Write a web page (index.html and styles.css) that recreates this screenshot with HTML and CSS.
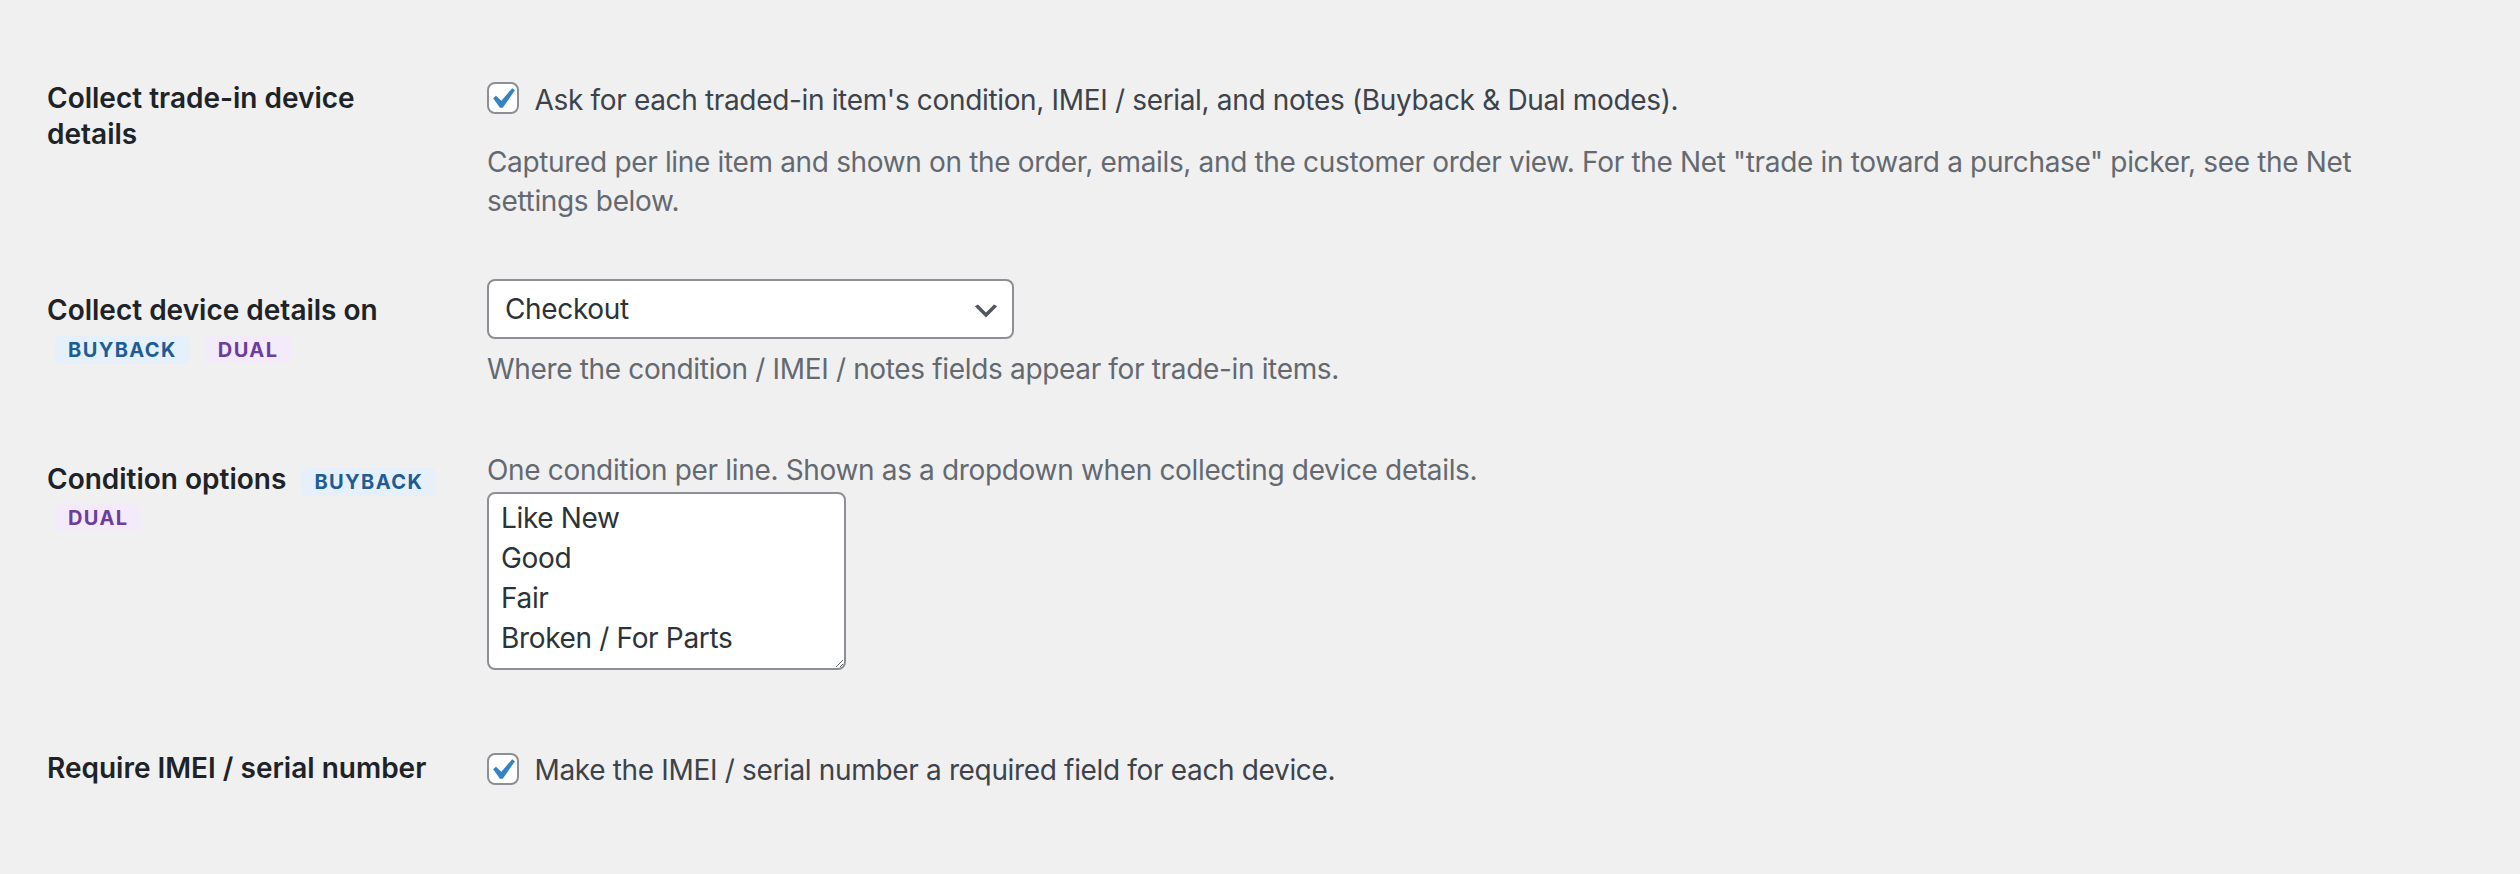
FILE: index.html
```html
<!DOCTYPE html>
<html lang="en">
  <head>
    <meta charset="UTF-8" />
    <meta name="viewport" content="width=device-width, initial-scale=1.0" />
    <title>Trade-in Settings</title>
    <link rel="stylesheet" href="styles.css">
  </head>
  <body>
    <div class="form-table">
      <!-- Collect details toggle -->
      <div class="row">
        <div class="row-label">Collect trade-in device details</div>
        <div class="row-field">
          <label class="check"><span class="box"><svg viewBox="0 0 20 20"><path d="M14.83 4.89l1.34.94-5.81 8.38H9.02L5.78 9.67l1.34-1.25 2.57 2.4z" fill="#3582c4"/></svg></span> Ask for each traded-in item's condition, IMEI / serial, and notes (Buyback &amp; Dual modes).</label>
          <p class="description">Captured per line item and shown on the order, emails, and the customer order view. For the Net "trade in toward a purchase" picker, see the Net settings below.</p>
        </div>
      </div>

      <!-- Where to collect -->
      <div class="row">
        <div class="row-label">Collect device details on <span class="badge buyback">BUYBACK</span> <span class="badge dual">DUAL</span></div>
        <div class="row-field">
          <div class="select-wrap">
            <select>
              <option>Checkout</option>
              <option>Cart</option>
            </select>
            <svg class="chev" viewBox="0 0 20 20"><path d="M5 6l5 5 5-5 2 1-7 7-7-7 2-1z" fill="#50575e"/></svg>
          </div>
          <p class="description after-select">Where the condition / IMEI / notes fields appear for trade-in items.</p>
        </div>
      </div>

      <!-- Condition list -->
      <div class="row">
        <div class="row-label">Condition options <span class="badge buyback">BUYBACK</span> <span class="badge dual">DUAL</span></div>
        <div class="row-field">
          <p class="description first">One condition per line. Shown as a dropdown when collecting device details.</p>
          <textarea rows="4">Like New
Good
Fair
Broken / For Parts</textarea>
        </div>
      </div>

      <!-- IMEI required -->
      <div class="row">
        <div class="row-label">Require IMEI / serial number</div>
        <div class="row-field">
          <label class="check"><span class="box"><svg viewBox="0 0 20 20"><path d="M14.83 4.89l1.34.94-5.81 8.38H9.02L5.78 9.67l1.34-1.25 2.57 2.4z" fill="#3582c4"/></svg></span> Make the IMEI / serial number a required field for each device.</label>
        </div>
      </div>
    </div>
  </body>
</html>
```

FILE: styles.css
```css
body {
  margin: 0;
  background: #f0f0f1;
  font-family: Inter, "Noto Sans", sans-serif;
  color: #3c434a;
}
.form-table {
  padding: 40px 80px 0 47px;
}
.row {
  display: grid;
  grid-template-columns: 420px 1fr;
}
.row-label {
  padding: 40px 20px 40px 0;
  font-size: 28px;
  font-weight: 600;
  line-height: 36.4px;
  color: #1d2327;
}
.row-field {
  padding: 30px 20px 32px;
  font-size: 28px;
  letter-spacing: -0.34px;
}
/* Checkbox rows */
.check {
  display: block;
  margin-top: 11px;
  line-height: 39.2px;
  color: #3c434a;
}
.box {
  display: inline-block;
  position: relative;
  box-sizing: border-box;
  width: 32px;
  height: 32px;
  margin: -8px 8px 0 0;
  border: 2px solid #8c8f94;
  border-radius: 8px;
  background: #fff;
  vertical-align: middle;
}
.box svg {
  position: absolute;
  left: -8px;
  top: -6px;
  width: 42px;
  height: 42px;
}
.description {
  margin: 23px 0 0;
  font-size: 28px;
  line-height: 38.5px;
  color: #646970;
}
.description.after-select {
  margin-top: 11px;
}
.description.first {
  margin-top: 0;
}
/* Mode badges */
.badge {
  display: inline-block;
  margin-left: 8px;
  padding: 4px 13px;
  border-radius: 6px;
  font-size: 20px;
  font-weight: 700;
  line-height: 20px;
  letter-spacing: 0.07em;
}
.badge.buyback {
  background: #e6f0fa;
  color: #1d5d94;
}
.badge.dual {
  background: #f3eafa;
  color: #6b3d9c;
}
/* Select */
.select-wrap {
  position: relative;
  width: 527px;
  margin-top: -3px;
}
.select-wrap select {
  -webkit-appearance: none;
  appearance: none;
  display: block;
  box-sizing: border-box;
  width: 100%;
  height: 60px;
  padding: 0 48px 0 16px;
  border: 2px solid #8c8f94;
  border-radius: 8px;
  background: #fff;
  font-family: inherit;
  font-size: 28px;
  letter-spacing: -0.34px;
  color: #2c3338;
}
.chev {
  position: absolute;
  right: 12px;
  top: 16px;
  width: 32px;
  height: 32px;
  pointer-events: none;
}
/* Textarea */
textarea {
  display: block;
  box-sizing: border-box;
  width: 359px;
  height: 178px;
  margin: 3px 0 8px;
  padding: 4px 12px;
  border: 2px solid #8c8f94;
  border-radius: 8px;
  background: #fff;
  font-family: inherit;
  font-size: 28px;
  line-height: 40px;
  letter-spacing: -0.34px;
  color: #2c3338;
  resize: vertical;
}
```
